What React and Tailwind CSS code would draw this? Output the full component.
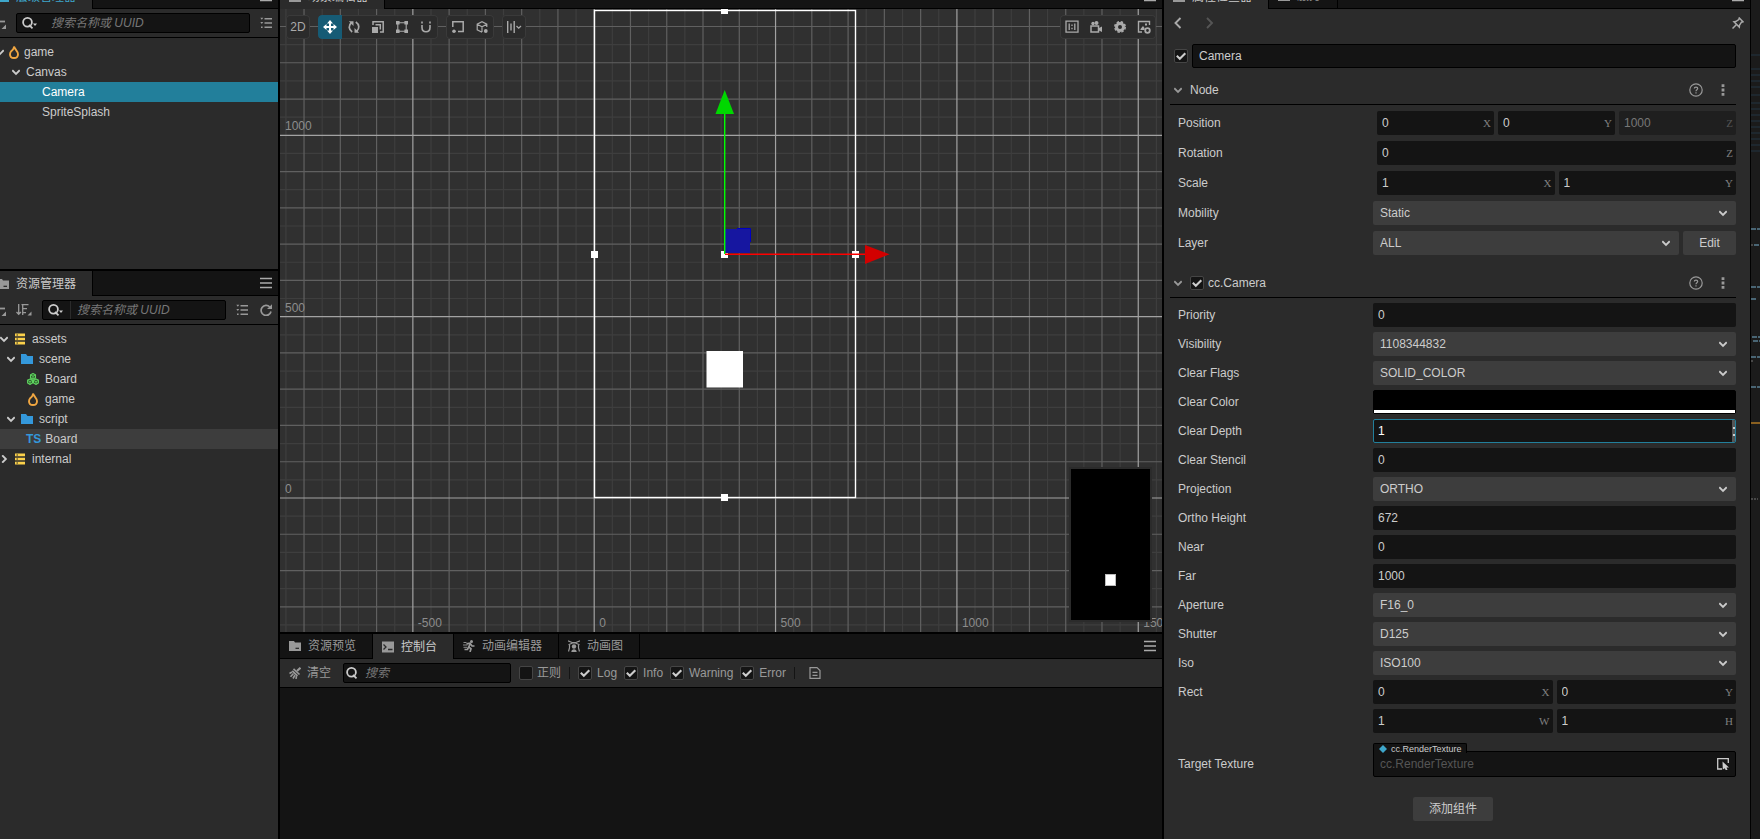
import React from 'react';
import clsx from 'clsx';

const GRID_SCALE = 0.3627;
const ORIGIN_X = 314.2;
const ORIGIN_Y = 489;

const Icon = ({ className, size = 12, box = 12, children }) => (
  <svg className={clsx('shrink-0', className)} width={size} height={size} viewBox={`0 0 ${box} ${box}`} fill="none" stroke="currentColor" aria-hidden="true">
    {children}
  </svg>
);

const ChevronDown = ({ className }) => (
  <Icon className={className} size={8} box={8}><path d="M0.3 2.2L4 5.9L7.7 2.2" strokeWidth="1.8" /></Icon>
);

const ChevronRight = ({ className }) => (
  <Icon className={className} size={8} box={8}><path d="M2.2 0.3L5.9 4L2.2 7.7" strokeWidth="1.8" /></Icon>
);

const MenuIcon = () => (
  <Icon><path d="M0 1.5H12M0 6H12M0 10.5H12" strokeWidth="1.6" /></Icon>
);

const Flame = ({ size = 12 }) => (
  <svg className="shrink-0 text-[#f0a641]" width={size} height="14" viewBox="0 0 10 14" fill="none" stroke="currentColor" aria-hidden="true">
    <path d="M5 1.5C5.5 4 9 6 9 9.2C9 11.5 7.2 13 5 13C2.8 13 1 11.5 1 9.2C1 7.5 2 6.5 2.6 5.8C3.2 5.8 4.8 4 5 1.5Z" strokeWidth="1.9" />
  </svg>
);

const Database = () => (
  <Icon className="text-[#fbd14b]">
    <path d="M1 0.5H11V3.2H1ZM1 4.7H11V7.3H1ZM1 8.8H11V11.5H1Z" fill="currentColor" stroke="none" />
    <path d="M2.5 2H4M2.5 6H4M2.5 10H4" stroke="#2b2b2b" />
  </Icon>
);

const Folder = () => (
  <Icon className="text-[#3498db]"><path d="M0 1H5L6.5 3H12V11H0Z" fill="currentColor" stroke="none" /></Icon>
);

const Prefab = () => (
  <Icon className="text-[#5fd35f]">
    <path d="M6 0.5L8.5 1.8V4.8L6 6L3.5 4.8V1.8ZM3 6L5.5 7.2V10L3 11.5L0.6 10V7.2ZM9 6L11.4 7.2V10L9 11.5L6.5 10V7.2Z" fill="#2b5a2b" stroke="currentColor" strokeWidth="1.1" />
    <path d="M4 2.2L6 3.2L8 2.2M1.2 7.7L3 8.7L4.8 7.7M7.2 7.7L9 8.7L10.8 7.7M6 3.2V5M3 8.7V11M9 8.7V11" strokeWidth="0.9" />
  </Icon>
);

const SearchIcon = ({ arrow }) => (
  <svg className="shrink-0 text-[#ccc]" width="16" height="14" viewBox="0 0 16 14" fill="none" stroke="currentColor" aria-hidden="true">
    <circle cx="5.5" cy="6.2" r="4.4" strokeWidth="1.8" />
    <path d="M7 8.8L10.5 12.3" strokeWidth="1.8" />
    {arrow && <path d="M11 7.5H15L13 10Z" fill="currentColor" stroke="none" />}
  </svg>
);

const CreateIcon = () => (
  <svg className="shrink-0" width="6" height="14" viewBox="0 0 6 14" fill="none" stroke="currentColor" aria-hidden="true">
    <path d="M0 5.5H5" strokeWidth="1.8" />
    <path d="M6 8.5V13H1.5Z" fill="currentColor" stroke="none" />
  </svg>
);

const SortIcon = () => (
  <svg className="shrink-0" width="16" height="14" viewBox="0 0 16 14" fill="none" stroke="currentColor" aria-hidden="true">
    <path d="M2.7 1V11M0.5 9L2.7 11.3L4.9 9M5.5 1.7H12.5M6.7 5.7H11M6.7 9.7H10M6.7 1.7V12" strokeWidth="1.3" />
    <path d="M15.5 8.5V12.5H11.5Z" fill="currentColor" stroke="none" />
  </svg>
);

const ListIcon = () => (
  <Icon><path d="M4.5 1.7H12M4.5 6H12M4.5 10.3H12" strokeWidth="1.4" /><path d="M0.3 0.7H3.3L1.8 2.7ZM0.3 5H3.3L1.8 7ZM1 9.6H2.6V11H1Z" fill="currentColor" stroke="none" /></Icon>
);

const RefreshIcon = () => (
  <Icon><path d="M9.8 3A5 5 0 1 0 11 7.5" strokeWidth="1.7" /><path d="M12 0.2V5H7Z" fill="currentColor" stroke="none" /></Icon>
);

const FolderTabIcon = () => (
  <Icon><path d="M0 1H5L6 2.5H12V11H0Z" fill="currentColor" stroke="none" /><path d="M6.5 8.3H10" stroke="#222" strokeWidth="1.2" /></Icon>
);

const ConsoleTabIcon = () => (
  <Icon><path d="M0 0.5H12V11.5H0Z" fill="currentColor" stroke="none" /><path d="M1.5 3.5L4 6L1.5 8.5M6 8.5H10.5" stroke="#2b2b2b" strokeWidth="1.3" /></Icon>
);

const RunnerIcon = () => (
  <Icon>
    <circle cx="8.5" cy="1.5" r="1.5" fill="currentColor" stroke="none" />
    <path d="M3.5 3.8L7 3.2L9 6H11.5M7.2 3.5L5.8 7L8 8.7L7 12M5.5 7L4.5 9.5H1.5" strokeWidth="1.7" />
    <path d="M0.5 2.5H3.5M0 5H4.5M0.5 7.3H4" strokeWidth="0.9" />
  </Icon>
);

const GraphIcon = () => (
  <Icon>
    <path d="M0 0.8L4 2.5H8L12 0.8M0.5 4.8L4.5 3H7.5L11.5 4.8M1.5 5V8L0.5 11.5M10.5 5V8L11.5 11.5" strokeWidth="1.2" />
    <circle cx="6" cy="6.5" r="2.2" fill="currentColor" stroke="none" />
    <path d="M3.3 12C3.3 8.3 8.7 8.3 8.7 12Z" fill="currentColor" stroke="none" />
  </Icon>
);

const BroomIcon = () => (
  <Icon><path d="M11.5 0.8L8 4" strokeWidth="2.2" /><path d="M4.5 1.8L10.5 7.5M3.3 3.8L8.5 8.8" strokeWidth="1.6" /><path d="M3 5L0.5 6.5M4.5 6.5L1.5 9.8M6 8L4 11.5M7.5 9.2L7 12" strokeWidth="1.6" /></Icon>
);

const FileIcon = () => (
  <Icon><path d="M1 0.6H8L11 3.5V11.4H1ZM3.5 5.3H8.5M3.5 8.3H8.5" strokeWidth="1.2" /></Icon>
);

const Checkbox = ({ id, checked, label }) => (
  <span className="relative block size-[14px] shrink-0">
    <input id={id} type="checkbox" defaultChecked={checked} aria-label={label} className="peer block size-[14px] appearance-none rounded-[2px] border border-[#454545] bg-[#141414]" />
    <svg className="pointer-events-none absolute inset-0 hidden text-[#ccc] peer-checked:block" width="14" height="14" viewBox="0 0 14 14" fill="none" stroke="currentColor" aria-hidden="true">
      <path d="M2.8 6.8L5.8 9.8L11.3 4.2" strokeWidth="2.1" />
    </svg>
  </span>
);

/* ---------- tabs ---------- */

const Tab = ({ active, focused, icon, children, className }) => (
  <button
    type="button"
    className={clsx(
      'flex h-full items-center gap-[7px] border-r border-black pl-[9px] whitespace-nowrap',
      active ? 'bg-[#2b2b2b]' : 'border-b bg-[#141414]',
      focused ? 'text-[#3ea6ca]' : active ? 'text-[#ccc]' : 'text-[#999]',
      className
    )}
  >
    <span className={focused ? '' : 'text-[#999]'}>{icon}</span>
    {children}
  </button>
);

const TabBar = ({ children, className }) => (
  <div className={clsx('flex h-[25px] shrink-0', className)}>
    {children}
    <div className="flex flex-1 items-center justify-end border-b border-black bg-[#141414] pr-[6px] text-[#aaa]">
      <button type="button" aria-label="菜单"><MenuIcon /></button>
    </div>
  </div>
);

/* ---------- left column ---------- */

const TreeRow = ({ indent, arrow, icon, name, state, gap = 'gap-[6px]' }) => (
  <li className={clsx('flex h-5 items-center', gap, indent, state === 'selected' ? 'bg-[#227f9b] text-white' : state === 'hover' ? 'bg-[#3d3d3d]' : '')}>
    {arrow === 'down' && <ChevronDown className="text-[#ccc]" />}
    {arrow === 'right' && <ChevronRight className="text-[#ccc]" />}
    {icon}
    <span>{name}</span>
  </li>
);

const SearchBox = ({ divided }) => (
  <label className="flex h-5 min-w-0 flex-1 items-center rounded-[2px] border border-black bg-[#141414]">
    <span className={clsx('flex h-full w-7 items-center pl-[5px]', divided && 'border-r border-[#2b2b2b]')}>
      <SearchIcon arrow />
    </span>
    <input type="search" aria-label="搜索" placeholder="搜索名称或 UUID" className="h-full min-w-0 flex-1 bg-transparent pl-[6px] outline-none placeholder:text-[#777] placeholder:italic" />
  </label>
);

const Hierarchy = () => (
  <section className="flex h-[269px] shrink-0 flex-col bg-[#2b2b2b]">
    <TabBar className="-mt-4">
      <Tab active focused icon={<FolderTabIcon />} className="-ml-[12px] w-[105px]">层级管理器</Tab>
    </TabBar>
    <div className="flex h-[29px] shrink-0 items-center gap-[10px] border-b border-black pr-[6px] pb-px text-[#999]">
      <CreateIcon />
      <SearchBox />
      <button type="button" aria-label="展开"><ListIcon /></button>
    </div>
    <ul className="pt-1">
      <TreeRow indent="-ml-1" gap="gap-[5px]" arrow="down" icon={<Flame size={10} />} name="game" />
      <TreeRow indent="pl-3" arrow="down" name="Canvas" />
      <TreeRow indent="pl-[42px]" name="Camera" state="selected" />
      <TreeRow indent="pl-[42px]" name="SpriteSplash" />
    </ul>
  </section>
);

const Assets = () => (
  <section className="flex flex-1 flex-col border-t-2 border-black bg-[#2b2b2b]">
    <TabBar>
      <Tab active icon={<FolderTabIcon />} className="-ml-[12px] w-[105px]">资源管理器</Tab>
    </TabBar>
    <div className="flex h-[29px] shrink-0 items-center gap-[10px] border-b border-black pr-[6px] pb-px text-[#999]">
      <CreateIcon />
      <button type="button" aria-label="排序"><SortIcon /></button>
      <SearchBox divided />
      <div className="flex items-center gap-3">
        <button type="button" aria-label="展开"><ListIcon /></button>
        <button type="button" aria-label="刷新"><RefreshIcon /></button>
      </div>
    </div>
    <ul className="pt-1">
      <TreeRow indent="pl-0" arrow="down" icon={<Database />} name="assets" />
      <TreeRow indent="pl-[7px]" arrow="down" icon={<Folder />} name="scene" />
      <TreeRow indent="pl-[27px]" icon={<Prefab />} name="Board" />
      <TreeRow indent="pl-[27px]" icon={<Flame />} name="game" />
      <TreeRow indent="pl-[7px]" arrow="down" icon={<Folder />} name="script" />
      <TreeRow indent="pl-[26px]" gap="gap-1" state="hover" icon={<span className="font-bold text-[#3498db]">TS</span>} name="Board" />
      <TreeRow indent="pl-0" arrow="right" icon={<Database />} name="internal" />
    </ul>
  </section>
);

/* ---------- scene ---------- */

const units = Array.from({ length: 121 }, (_, i) => (i - 40) * 50);

const lineColor = (unit) => {
  if (unit % 500 === 0) return '#a2a2a2';
  if (unit % 100 === 0) return '#606060';
  return '#3e3e3e';
};

// faint lines first, so the major ones are drawn over them
const sortedUnits = [
  ...units.filter((u) => u % 100 !== 0),
  ...units.filter((u) => u % 100 === 0 && u % 500 !== 0),
  ...units.filter((u) => u % 500 === 0),
];

const Handle = ({ x, y }) => <rect x={x - 3} y={y - 3} width="7" height="7" fill="#fff" />;

const SceneCanvas = () => (
  <svg className="absolute inset-0 size-full" aria-label="scene">
    {sortedUnits.map((u) => (
      <g key={u} stroke={lineColor(u)} strokeWidth="1.2">
        <line x1={ORIGIN_X + u * GRID_SCALE} x2={ORIGIN_X + u * GRID_SCALE} y1="0" y2="100%" />
        <line y1={ORIGIN_Y - u * GRID_SCALE} y2={ORIGIN_Y - u * GRID_SCALE} x1="0" x2="100%" />
      </g>
    ))}
    <g fill="#8c8c8c" fontSize="12">
      {[1000, 500, 0].map((u) => (
        <text key={u} x="5" y={ORIGIN_Y - u * GRID_SCALE - 5}>{u}</text>
      ))}
      {[-500, 0, 500, 1000, 1500].map((u) => (
        <text key={u} x={ORIGIN_X + u * GRID_SCALE + 5} y="618">{u}</text>
      ))}
    </g>
    <rect x="314.5" y="1.5" width="261" height="487" fill="none" stroke="#fff" strokeWidth="1.4" />
    <rect x="426.5" y="342" width="36.5" height="36.5" fill="#fff" />
    <Handle x={314} y={245} />
    <Handle x={575} y={245} />
    <Handle x={444} y={245} />
    <Handle x={444} y={488} />
    <Handle x={444} y={1} />
    <rect x="445" y="220" width="25" height="24" fill="#1616a0" />
    <path d="M457 219.5H470.5V233" fill="none" stroke="#0000c0" />
    <path d="M444.7 245V104" stroke="#00ff00" strokeWidth="1.4" />
    <path d="M444.7 81L454 105H435.5Z" fill="#00d800" />
    <path d="M445 245.3H586" stroke="#ff0000" strokeWidth="1.4" />
    <path d="M609.5 245.3L585 236V255Z" fill="#d20000" />
  </svg>
);

const ToolGroup = ({ children }) => (
  <div className="flex h-6 overflow-hidden rounded-[4px] bg-[#2b2b2b] text-[#aaa] ring-1 ring-[#3a3a3a] ring-inset">{children}</div>
);

const Tool = ({ label, active, children }) => (
  <button type="button" aria-label={label} className={clsx('flex size-6 items-center justify-center', active && 'rounded-l-[4px] bg-[#165b75] text-white')}>
    {children}
  </button>
);

const SceneToolbar = () => (
  <div className="relative flex items-start gap-2 p-[6px]">
    <ToolGroup>
      <Tool label="2D">2D</Tool>
    </ToolGroup>
    <ToolGroup>
      <Tool label="移动" active>
        <Icon size={14} box={14}><path d="M7 2V12M2 7H12" strokeWidth="2" /><path d="M7 0L10 3.5H4ZM7 14L10 10.5H4ZM0 7L3.5 4V10ZM14 7L10.5 4V10Z" fill="currentColor" stroke="none" /></Icon>
      </Tool>
      <Tool label="旋转">
        <Icon><path d="M4.2 11C0.5 8.5 0.2 4.5 3.5 1.5M7.8 1C11.5 3.5 11.8 7.5 8.5 10.5" strokeWidth="1.7" /><path d="M0.8 0.3H5.5V5ZM11.2 11.7H6.5V7Z" fill="currentColor" stroke="none" /></Icon>
      </Tool>
      <Tool label="缩放">
        <Icon><path d="M1 4V0.8H11.2V11H8" strokeWidth="1.5" /><path d="M0 6H6V12H0Z" fill="currentColor" stroke="none" /><path d="M3.5 3.7H8.3V8.5" strokeWidth="1.5" /></Icon>
      </Tool>
      <Tool label="矩形">
        <Icon><path d="M1.8 1.8H10.2V10.2H1.8Z" strokeWidth="1.1" /><path d="M0 0H3.6V3.6H0ZM8.4 0H12V3.6H8.4ZM0 8.4H3.6V12H0ZM8.4 8.4H12V12H8.4Z" fill="currentColor" stroke="none" /></Icon>
      </Tool>
      <Tool label="吸附">
        <Icon><path d="M2 4V6.5C2 12.2 10 12.2 10 6.5V4M2 0.5V2.5M10 0.5V2.5" strokeWidth="1.6" /></Icon>
      </Tool>
    </ToolGroup>
    <ToolGroup>
      <Tool label="锚点">
        <Icon><path d="M0.8 6V0.8H11.2V10.5H6" strokeWidth="1.5" /><circle cx="2" cy="10.2" r="1.8" fill="currentColor" stroke="none" /></Icon>
      </Tool>
      <Tool label="坐标">
        <Icon><path d="M10.8 6V3.2L6 0.7L1.2 3.2V8.8L6 11.3M1.2 3.2L6 5.7L10.8 3.2M6 5.7V11" strokeWidth="1.2" /><circle cx="9.8" cy="10" r="1.9" fill="currentColor" stroke="none" /></Icon>
      </Tool>
    </ToolGroup>
    <ToolGroup>
      <Tool label="对齐">
        <Icon size={16} box={16}><path d="M1.7 2V14M5 4.5V11.5M8.2 2V14" strokeWidth="1.4" /><path d="M10.5 7L12.7 9.2L15 7" strokeWidth="1.3" /></Icon>
      </Tool>
    </ToolGroup>
    <div className="ml-auto">
      <ToolGroup>
        <Tool label="分辨率">
          <Icon size={14} box={14}><path d="M1 1.2H13V12.2H1Z" strokeWidth="1.3" /><path d="M4.2 3.5V10M9.8 3.5V10M7 4.5V6M7 7.8V9.2" strokeWidth="1.3" /></Icon>
        </Tool>
        <Tool label="相机">
          <Icon><path d="M1 5H8.5V11H1Z" strokeWidth="1.5" /><path d="M9 7L12 5.5V11L9 9.5Z" fill="currentColor" stroke="none" /><circle cx="3" cy="2.5" r="1.7" fill="currentColor" stroke="none" /><circle cx="6.5" cy="2" r="2" fill="currentColor" stroke="none" /></Icon>
        </Tool>
        <Tool label="设置">
          <Icon><circle cx="6" cy="6" r="3.5" strokeWidth="3" /><circle cx="6" cy="6" r="5.2" strokeWidth="1.6" strokeDasharray="2.4 1.7" /></Icon>
        </Tool>
        <Tool label="参考图">
          <Icon size={14} box={14}><path d="M5 12H1.5V1.5H12.5V5" strokeWidth="1.4" /><circle cx="10.5" cy="10.5" r="2.3" strokeWidth="1.8" /><path d="M3.5 9L6 6L7.5 8V10H3.5ZM8 3.5H10V5.5H8Z" fill="currentColor" stroke="none" /></Icon>
        </Tool>
      </ToolGroup>
    </div>
  </div>
);

const Scene = () => (
  <section className="flex min-h-0 flex-1 flex-col">
    <TabBar className="-mt-4">
      <Tab active icon={<FolderTabIcon />} className="w-[105px]">场景编辑器</Tab>
    </TabBar>
    <div className="relative flex-1 overflow-hidden bg-[#303030]">
      <SceneCanvas />
      <SceneToolbar />
      {/* camera preview */}
      <div className="absolute right-[10px] bottom-[10px] h-[155px] w-[83px] border-2 border-[#2b2b2b] bg-black">
        <div className="absolute top-[105px] left-[34px] h-3 w-[11px] border border-[#bbb] bg-white" />
      </div>
    </div>
  </section>
);

/* ---------- console ---------- */

const LOG_FILTERS = ['Log', 'Info', 'Warning', 'Error'];

const Console = () => (
  <section className="flex h-[207px] shrink-0 flex-col border-t-2 border-black bg-[#141414]">
    <TabBar>
      <Tab icon={<FolderTabIcon />} className="w-[93px]">资源预览</Tab>
      <Tab active icon={<ConsoleTabIcon />} className="w-[81px]">控制台</Tab>
      <Tab icon={<RunnerIcon />} className="w-[105px]">动画编辑器</Tab>
      <Tab icon={<GraphIcon />} className="w-[81px]">动画图</Tab>
    </TabBar>
    <div className="flex h-[29px] shrink-0 items-center border-b border-black bg-[#2b2b2b] pb-px pl-[9px] text-[#999]">
      <button type="button" className="flex items-center gap-[6px]"><BroomIcon />清空</button>
      <label className="ml-3 flex h-5 w-[168px] items-center rounded-[2px] border border-black bg-[#141414] pl-[2px]">
        <SearchIcon />
        <input type="search" aria-label="搜索" placeholder="搜索" className="h-full min-w-0 flex-1 bg-transparent pl-[3px] outline-none placeholder:text-[#777] placeholder:italic" />
      </label>
      <div className="ml-2 flex items-center gap-1">
        <Checkbox id="regex" />
        <label htmlFor="regex">正则</label>
      </div>
      <div className="mx-2 h-3 w-px bg-[#141414]" />
      <div className="flex items-center gap-[7px]">
        {LOG_FILTERS.map((name) => (
          <div key={name} className="flex items-center gap-[5px]">
            <Checkbox id={name} checked />
            <label htmlFor={name}>{name}</label>
          </div>
        ))}
      </div>
      <div className="mx-2 h-3 w-px bg-[#141414]" />
      <button type="button" aria-label="日志文件" className="ml-[6px]"><FileIcon /></button>
    </div>
  </section>
);

/* ---------- inspector ---------- */

const NumberField = ({ id, label, value, axis, disabled, focused }) => (
  <div className={clsx('flex h-6 min-w-0 flex-1 items-center overflow-hidden rounded-[2px]', disabled ? 'bg-[#1f1f1f] text-[#777]' : 'bg-[#141414]', focused && 'border border-[#227f9b] text-white')}>
    <input id={id} aria-label={label} defaultValue={value} disabled={disabled} className={clsx('h-full min-w-0 flex-1 bg-transparent outline-none', focused ? 'pl-1' : 'pl-[5px]')} />
    {axis && <span className={clsx('pr-[3px] font-["Liberation_Serif",serif] text-[11px]', disabled ? 'text-[#555]' : 'text-[#808080]')}>{axis}</span>}
    {focused && (
      <span className="flex h-full w-[3px] flex-col items-end justify-around bg-[#555] py-1">
        <span className="size-[2px] bg-[#ccc]" />
        <span className="size-[2px] bg-[#ccc]" />
      </span>
    )}
  </div>
);

const SelectField = ({ id, value }) => (
  <div className="relative h-6 min-w-0 flex-1">
    <select id={id} defaultValue={value} className="h-6 w-full appearance-none rounded-[2px] bg-[#3d3d3d] pl-[7px] outline-none">
      <option>{value}</option>
    </select>
    <ChevronDown className="pointer-events-none absolute top-2 right-[9px] text-[#ccc]" />
  </div>
);

const Row = ({ label, htmlFor, children, inset }) => (
  <div className="flex items-center pl-2">
    <label htmlFor={htmlFor} className="w-[195px] shrink-0">{label}</label>
    <div className={clsx('flex min-w-0 flex-1 gap-1', inset && 'pl-1')}>{children}</div>
  </div>
);

const SectionHeader = ({ title, children }) => (
  <div className="flex h-[30px] items-center border-b border-black">
    <button type="button" aria-label={title} className="flex w-4 justify-center text-[#999]"><ChevronDown /></button>
    <div className="flex items-center gap-1 pl-1">
      {children}
      <span>{title}</span>
    </div>
    <div className="ml-auto flex items-center gap-3 pr-[5px] text-[#999]">
      <button type="button" aria-label="帮助">
        <Icon size={14} box={14}><circle cx="7" cy="7" r="6.2" strokeWidth="1.2" /><path d="M5.3 5.6C5.3 3.5 8.7 3.5 8.7 5.6C8.7 6.8 7 6.8 7 8.2M7 9.2V10.4" strokeWidth="1.2" /></Icon>
      </button>
      <button type="button" aria-label="更多">
        <Icon size={16} box={16}><path d="M8 2.2V5M8 6.6V9.4M8 11V13.8" strokeWidth="2.8" /></Icon>
      </button>
    </div>
  </div>
);

const CAMERA_PROPS = [
  { label: 'Priority', value: '0' },
  { label: 'Visibility', value: '1108344832', type: 'select' },
  { label: 'Clear Flags', value: 'SOLID_COLOR', type: 'select' },
  { label: 'Clear Color', value: '#000000', type: 'color' },
  { label: 'Clear Depth', value: '1', focused: true },
  { label: 'Clear Stencil', value: '0' },
  { label: 'Projection', value: 'ORTHO', type: 'select' },
  { label: 'Ortho Height', value: '672' },
  { label: 'Near', value: '0' },
  { label: 'Far', value: '1000' },
  { label: 'Aperture', value: 'F16_0', type: 'select' },
  { label: 'Shutter', value: 'D125', type: 'select' },
  { label: 'Iso', value: 'ISO100', type: 'select' },
];

const PropField = ({ prop }) => {
  if (prop.type === 'select') return <SelectField id={prop.label} value={prop.value} />;
  if (prop.type === 'color') {
    return (
      <button id={prop.label} type="button" aria-label={prop.label} className="flex h-6 flex-1 flex-col justify-end rounded-[2px] border border-black bg-black">
        <span className="h-[3px] w-full bg-white" />
      </button>
    );
  }
  return <NumberField id={prop.label} value={prop.value} focused={prop.focused} />;
};

const Inspector = () => (
  <aside className="flex w-[587px] shrink-0 flex-col border-r border-black bg-[#2b2b2b] text-[#ccc]">
    <TabBar className="-mt-4">
      <Tab active icon={<FolderTabIcon />} className="w-[105px]">属性检查器</Tab>
      <Tab icon={<FolderTabIcon />} className="w-[69px]">服务</Tab>
    </TabBar>
    <div className="flex h-7 shrink-0 items-center pr-[6px] pl-[10px] text-[#aaa]">
      <button type="button" aria-label="后退"><Icon><path d="M6.5 1L1.5 6L6.5 11" strokeWidth="1.9" /></Icon></button>
      <button type="button" aria-label="前进" className="ml-5 text-[#555]"><Icon><path d="M1 1L6 6L1 11" strokeWidth="1.9" /></Icon></button>
      <button type="button" aria-label="锁定" className="ml-auto">
        <Icon><path d="M7.3 1L11 4.7L9.5 5.2L7.5 8.2L7.3 10L2 4.7L3.8 4.5L6.8 2.5ZM4.5 7.5L0.5 11.5" strokeWidth="1.5" /></Icon>
      </button>
    </div>
    <div className="flex flex-col pr-[14px] pl-[6px]">
      <div className="mt-[7px] flex items-center gap-1 pl-1">
        <Checkbox label="active" checked />
        <input aria-label="name" defaultValue="Camera" className="h-6 min-w-0 flex-1 rounded-[2px] border border-black bg-[#141414] pl-[6px] outline-none" />
      </div>

      <div className="mt-[7px]">
        <SectionHeader title="Node" />
        <div className="mt-[6px] flex flex-col gap-[6px]">
          <Row label="Position" htmlFor="px" inset>
            <NumberField id="px" value="0" axis="X" />
            <NumberField label="Position Y" value="0" axis="Y" />
            <NumberField label="Position Z" value="1000" axis="Z" disabled />
          </Row>
          <Row label="Rotation" htmlFor="rz" inset>
            <NumberField id="rz" value="0" axis="Z" />
          </Row>
          <Row label="Scale" htmlFor="sx" inset>
            <NumberField id="sx" value="1" axis="X" />
            <NumberField label="Scale Y" value="1" axis="Y" />
          </Row>
          <Row label="Mobility" htmlFor="mobility">
            <SelectField id="mobility" value="Static" />
          </Row>
          <Row label="Layer" htmlFor="layer">
            <SelectField id="layer" value="ALL" />
            <button type="button" className="h-6 w-[53px] rounded-[2px] bg-[#3d3d3d]">Edit</button>
          </Row>
        </div>
      </div>

      <div className="mt-[13px]">
        <SectionHeader title="cc.Camera">
          <Checkbox label="enabled" checked />
        </SectionHeader>
        <div className="mt-[5px] flex flex-col gap-[5px]">
          {CAMERA_PROPS.map((prop) => (
            <Row key={prop.label} label={prop.label} htmlFor={prop.label}>
              <PropField prop={prop} />
            </Row>
          ))}
          <Row label="Rect" htmlFor="rectx">
            <NumberField id="rectx" value="0" axis="X" />
            <NumberField label="Rect Y" value="0" axis="Y" />
          </Row>
          <Row>
            <NumberField label="Rect W" value="1" axis="W" />
            <NumberField label="Rect H" value="1" axis="H" />
          </Row>
        </div>
        <div className="mt-[18px]">
          <Row label="Target Texture" htmlFor="target">
            <div className="relative flex-1">
              <div className="flex h-[26px] items-center rounded-[2px] border border-black bg-[#141414] pr-[6px]">
                <input id="target" placeholder="cc.RenderTexture" className="h-full min-w-0 flex-1 bg-transparent pl-[6px] outline-none placeholder:text-[#555]" />
                <button type="button" aria-label="选择" className="text-[#ccc]">
                  <Icon><path d="M5 11H0.7V0.7H11.3V5" strokeWidth="1.3" /><path d="M5.5 3.5L12 9.5H9.5L10.5 12L8.8 12.3L7.8 10.2L5.8 11.5Z" fill="currentColor" stroke="none" /></Icon>
                </button>
              </div>
              {/* asset type tag, sits on the field's top border */}
              <div className="absolute -top-2 left-0 flex h-[10px] items-center gap-1 rounded-t-[2px] border-x border-t border-black bg-[#141414] pr-1 pl-[5px] text-[9px]">
                <Icon size={8} box={8} className="text-[#3ea6ca]"><path d="M4 0L8 4L4 8L0 4Z" fill="currentColor" stroke="none" /></Icon>
                cc.RenderTexture
              </div>
            </div>
          </Row>
        </div>
      </div>
      <button type="button" className="mt-5 h-6 w-20 self-center rounded-[2px] bg-[#3d3d3d]">添加组件</button>
    </div>
  </aside>
);

export default function App() {
  return (
    <div className='flex h-screen min-h-[830px] overflow-hidden bg-black font-["Liberation_Sans","Noto_Sans_CJK_SC",sans-serif] text-[12px] leading-4 text-[#ccc]'>
      <div className="flex w-[278px] shrink-0 flex-col overflow-hidden">
        <Hierarchy />
        <Assets />
      </div>
      <main className="mx-[2px] flex min-w-0 flex-1 flex-col overflow-hidden">
        <Scene />
        <Console />
      </main>
      <Inspector />
      <div className="w-[9px] shrink-0 bg-[#1b1b1b]">
        <svg className="block h-full w-full" fill="none" aria-hidden="true">
          <path d="M0 55H9M0 69H9M0 75H9M0 81H9M0 87H9M0 95H9M0 103H9M0 109H9M0 115H9M0 121H9M0 127H9M0 133H9M0 139H9M0 145H9M0 151H9" stroke="#1e272e" strokeWidth="2" />
          <path d="M0 229H9M3 245H9M0 287H9M0 299H6M1 337H9M2 341H9M0 357H9M0 387H9" stroke="#5a7f93" strokeDasharray="5 1" strokeWidth="1.4" />
          <path d="M0 245H2M0 361H2M0 499H7" stroke="#777" strokeDasharray="2 1" />
          <path d="M0 423H9" stroke="#8a6020" strokeWidth="2" />
        </svg>
      </div>
    </div>
  );
}
